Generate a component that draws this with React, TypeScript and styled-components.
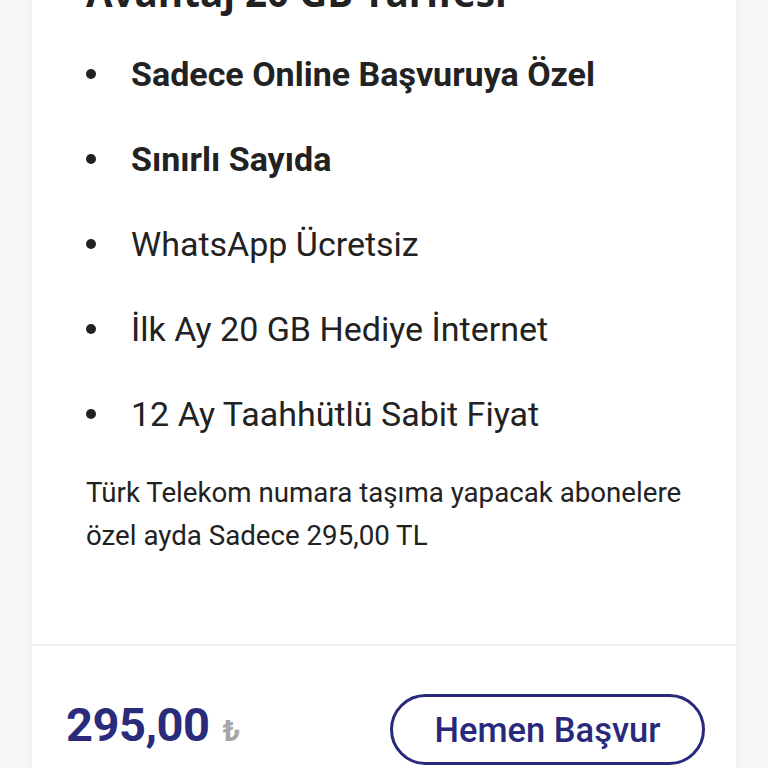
import React from 'react';
import styled, { createGlobalStyle } from 'styled-components';

const GlobalStyle = createGlobalStyle`
  html, body {
    margin: 0;
    padding: 0;
    background: #f7f7f7;
  }
  * {
    box-sizing: border-box;
  }
`;

const Page = styled.div`
  height: 768px;
  overflow: hidden;
  padding: 0 32px;
  background: #f7f7f7;
  font-family: Roboto, "Liberation Sans", sans-serif;
  color: #222222;
`;

const Card = styled.div`
  margin-top: -31px;
  background: #ffffff;
  box-shadow: 0 0 10px rgba(0, 0, 0, 0.05);
`;

const Body = styled.div`
  padding: 0 40px 87px 54px;
  border-bottom: 2px solid #ededed;
`;

const Title = styled.h2`
  margin: 0;
  font-family: "Open Sans", "Liberation Sans", sans-serif;
  font-weight: 700;
  font-size: 38.6px;
  line-height: 46px;
  color: #222222;
`;

const List = styled.ul`
  list-style: none;
  margin: 16px 0 0 0;
  padding: 0;
`;

const Item = styled.li<{ $bold?: boolean }>`
  display: flex;
  align-items: center;
  height: 85px;
  font-size: 34px;
  font-weight: ${p => (p.$bold ? 700 : 400)};
  color: #222222;

  &::before {
    content: '';
    flex: none;
    width: 10px;
    height: 10px;
    border-radius: 50%;
    background: #222222;
    margin-right: 35px;
  }
`;

const Note = styled.p`
  margin: 15px 0 0 0;
  font-size: 27.7px;
  line-height: 43px;
  color: #222222;
`;

const Footer = styled.div`
  display: flex;
  justify-content: space-between;
  align-items: center;
  padding: 48px 31px 40px 34px;
`;

const Price = styled.div`
  display: flex;
  align-items: baseline;
  margin-bottom: 10px;
`;

const Amount = styled.span`
  font-size: 47px;
  line-height: 1;
  font-weight: 700;
  color: #2a2b7b;
  letter-spacing: -0.5px;
`;

const Currency = styled.span`
  margin-left: 13px;
  font-size: 30px;
  font-weight: 700;
  color: #a6a6a6;
`;

const ApplyButton = styled.button`
  width: 315px;
  height: 71px;
  border: 3px solid #28297b;
  border-radius: 36px;
  background: #ffffff;
  font-family: Roboto, "Liberation Sans", sans-serif;
  font-size: 34.5px;
  font-weight: 500;
  color: #28297b;
  cursor: pointer;
`;

const features = [
  { text: 'Sadece Online Başvuruya Özel', bold: true },
  { text: 'Sınırlı Sayıda', bold: true },
  { text: 'WhatsApp Ücretsiz', bold: false },
  { text: 'İlk Ay 20 GB Hediye İnternet', bold: false },
  { text: '12 Ay Taahhütlü Sabit Fiyat', bold: false },
];

export default function App() {
  return (
    <>
      <GlobalStyle />
      <Page>
        <Card>
          <Body>
            <Title>Avantaj 20 GB Tarifesi</Title>
            <List>
              {features.map(f => (
                <Item key={f.text} $bold={f.bold}>
                  {f.text}
                </Item>
              ))}
            </List>
            <Note>
              Türk Telekom numara taşıma yapacak abonelere özel ayda Sadece 295,00 TL
            </Note>
          </Body>
          <Footer>
            <Price>
              <Amount>295,00</Amount>
              <Currency>₺</Currency>
            </Price>
            <ApplyButton>Hemen Başvur</ApplyButton>
          </Footer>
        </Card>
      </Page>
    </>
  );
}
